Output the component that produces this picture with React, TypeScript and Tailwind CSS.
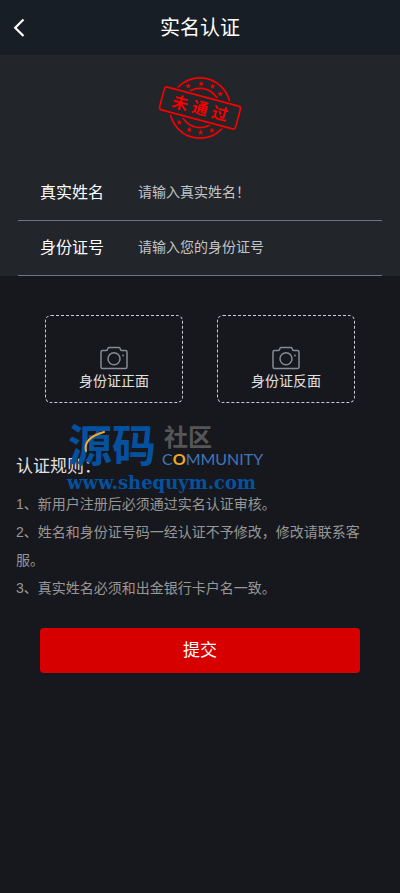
import { useState } from 'react';

const STAR = 'M0 -2.9L0.8 -0.9L2.8 -0.9L1.2 0.4L1.8 2.6L0 1.3L-1.8 2.6L-1.2 0.4L-2.8 -0.9L-0.8 -0.9Z';

const stars = [
  [-11.7, -22], [1.3, -24.3], [12.7, -21.7], [20.3, -14],
  [-20.7, 14.3], [-10.7, 21.7], [0.7, 24.3], [12, 22.3],
];

const fields = [
  { id: 'realName', label: '真实姓名', placeholder: '请输入真实姓名！' },
  { id: 'idNumber', label: '身份证号', placeholder: '请输入您的身份证号' },
];

const uploads = [
  { id: 'front', label: '身份证正面' },
  { id: 'back', label: '身份证反面' },
];

const rules = [
  '1、新用户注册后必须通过实名认证审核。',
  '2、姓名和身份证号码一经认证不予修改，修改请联系客服。',
  '3、真实姓名必须和出金银行卡户名一致。',
];

function RejectedStamp() {
  return (
    <svg width="88" height="66" viewBox="-44 -33 88 66" fill="none" stroke="#f60000" role="img" aria-label="未通过">
      <circle r="30.2" strokeWidth="1.7" />
      <circle r="19.6" strokeWidth="1.7" />
      {stars.map(([x, y]) => (
        <path key={`${x},${y}`} d={STAR} transform={`translate(${x} ${y})`} fill="#f60000" stroke="none" />
      ))}
      <g transform="rotate(15)">
        {/* clears the rings behind the plate */}
        <rect x="-42" y="-14" width="84" height="28" fill="#22252a" stroke="none" />
        <rect x="-39.3" y="-11.8" width="78.6" height="23.6" rx="2.5" strokeWidth="1.7" />
        <text x="0" y="6" textAnchor="middle" fill="#f60000" stroke="none" className="text-[16px] font-bold">
          未 通 过
        </text>
      </g>
    </svg>
  );
}

function CameraIcon() {
  return (
    <svg width="28" height="24" viewBox="0 0 28 24" fill="none" stroke="#848a96" strokeWidth="1.5" strokeLinejoin="round">
      <path d="M2.5 4.5H6.2Q7.2 4.5 7.5 3.5L8 2.2Q8.3 1.5 9.2 1.5H18.8Q19.7 1.5 20 2.2L20.5 3.5Q20.8 4.5 21.8 4.5H25.5Q27 4.5 27 6V21Q27 22.5 25.5 22.5H2.5Q1 22.5 1 21V6Q1 4.5 2.5 4.5Z" />
      <circle cx="14" cy="12.7" r="6" />
      <circle cx="23" cy="9.5" r="0.9" fill="#848a96" stroke="none" />
    </svg>
  );
}

function Watermark() {
  return (
    <svg width="220" height="90" viewBox="0 0 220 90" className="overflow-visible">
      <text x="2" y="49" fill="#04529f" className="text-[44px] font-bold">源码</text>
      <path d="M20 38Q17 25 38 19" fill="none" stroke="#f2a92a" strokeWidth="2" strokeLinecap="round" />
      <text x="98" y="33" fill="#565656" className="text-[24px] font-bold">社区</text>
      <text x="96" y="52" fill="#3f76b8" className="font-[Lato,sans-serif] text-[16px]">
        C<tspan fill="#f2a92a" fontWeight="700">O</tspan>MMUNITY
      </text>
      <text x="1" y="76" fill="#04529f" className="font-['DejaVu_Serif',serif] text-[18px] font-bold">
        www.shequym.com
      </text>
    </svg>
  );
}

export default function App() {
  const [values, setValues] = useState<Record<string, string>>({});

  return (
    <div className="min-h-screen bg-[#17181d] text-white font-['Liberation_Sans','Noto_Sans_CJK_SC',sans-serif]">
      <header className="relative flex h-[55px] items-center justify-center bg-[#171e25]">
        <button type="button" aria-label="返回" className="absolute left-3 top-4 flex">
          <svg width="14" height="24" viewBox="0 0 14 24" fill="none" stroke="#fff" strokeWidth="2.2">
            <path d="M11.5 3.5L3.2 11.7L11.5 20" />
          </svg>
        </button>
        <h1 className="text-[20px] leading-7">实名认证</h1>
      </header>

      <form onSubmit={(e) => e.preventDefault()}>
        <section className="bg-[#22252a] px-[18px]">
          <div className="flex h-[111px] justify-center pt-5">
            <RejectedStamp />
          </div>
          {fields.map((f) => (
            <div key={f.id} className="flex h-[55px] items-center border-b border-[#71747a] px-[22px] pb-px">
              <label htmlFor={f.id} className="w-[98px] shrink-0 text-[16px]">{f.label}</label>
              <input
                id={f.id}
                value={values[f.id] || ''}
                onChange={(e) => setValues({ ...values, [f.id]: e.target.value })}
                placeholder={f.placeholder}
                className="min-w-0 flex-1 bg-transparent text-[14px] outline-none placeholder:text-[#c3c4c6]"
              />
            </div>
          ))}
        </section>

        <div className="grid grid-cols-2 gap-[34px] px-[45px] pt-[39px]">
          {uploads.map((u) => (
            <label
              key={u.id}
              htmlFor={u.id}
              className="relative flex h-[88px] cursor-pointer flex-col items-center rounded-md border border-dashed border-[#c8ced8] pt-[30px] text-[14px] leading-[22px] text-[#e2e2e2]"
            >
              <CameraIcon />
              {u.label}
              <input id={u.id} type="file" accept="image/*" className="sr-only" />
            </label>
          ))}
        </div>

        <section className="relative px-4 pt-[50px]">
          <h2 className="text-[17px] leading-7 text-[#e2e2e2]">认证规则：</h2>
          <div className="mt-[9px] text-[14px] leading-7 text-[#979797]">
            {rules.map((rule) => (
              <p key={rule}>{rule}</p>
            ))}
          </div>
          <div className="pointer-events-none absolute left-[66px] top-[10px]">
            <Watermark />
          </div>
        </section>

        <div className="px-10 pt-[26px]">
          <button type="submit" className="h-[45px] w-full rounded bg-[#d60000] text-[17px]">提交</button>
        </div>
      </form>
    </div>
  );
}
